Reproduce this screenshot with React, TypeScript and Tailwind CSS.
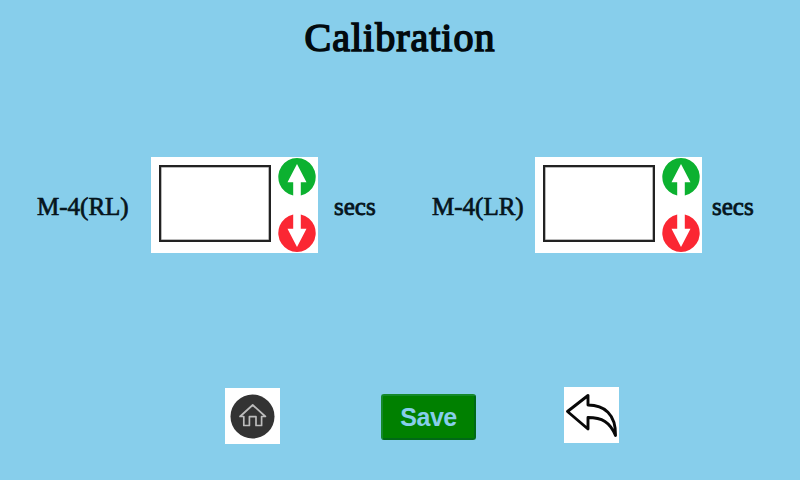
type SpinnerProps = { label: string; labelClass: string; unitClass: string };

const serif = "font-['Liberation_Serif','Times_New_Roman',serif]";

function UpArrow() {
  return (
    <svg className="block h-[40px] w-[38px]" viewBox="0 0 38 40" aria-hidden="true">
      <path d="M15.2 38.6A18.7 19 0 1 1 22.8 38.6V25.2H28.5L19 7L9.5 25.2H15.2Z" fill="#0cb130" />
    </svg>
  );
}

function DownArrow() {
  return (
    <svg className="block h-[40px] w-[38px]" viewBox="0 0 38 40" aria-hidden="true">
      <path d="M15.2 1.4A18.7 19 0 1 0 22.8 1.4V15.8H28.5L19 34L9.5 15.8H15.2Z" fill="#fb2733" />
    </svg>
  );
}

function Spinner({ label, labelClass, unitClass }: SpinnerProps) {
  return (
    <div className="flex items-start">
      <span className={`mt-[35px] whitespace-nowrap text-[25px] leading-[30px] text-[#06151d] [-webkit-text-stroke:0.7px_#06151d] ${labelClass} ${serif}`}>
        {label}
      </span>
      <div className="flex h-[96px] w-[167px] bg-white pl-[8px]">
        <button
          aria-label={label}
          className="mt-[8px] h-[77px] w-[112px] border-2 border-[#222] bg-white shadow-[inset_0_0_0_0.5px_#777]"
        />
        <div className="ml-[7px] flex flex-col justify-between">
          <button aria-label="Increase"><UpArrow /></button>
          <button aria-label="Decrease"><DownArrow /></button>
        </div>
      </div>
      <span className={`mt-[35px] text-[25px] leading-[30px] text-[#06151d] [-webkit-text-stroke:0.8px_#06151d] ${unitClass} ${serif}`}>
        secs
      </span>
    </div>
  );
}

export default function App() {
  return (
    <main className="flex h-[480px] w-[800px] flex-col overflow-hidden bg-[#87ceeb]">
      <h1 className={`h-[157px] pt-[15px] text-center text-[40px] leading-[46px] tracking-[1px] text-[#020a0e] [-webkit-text-stroke:1.6px_#020a0e] ${serif}`}>
        Calibration
      </h1>
      <section className="flex h-[230px] pl-[37px]">
        <Spinner label="M-4(RL)" labelClass="w-[114px]" unitClass="ml-[16px] w-[98px]" />
        <Spinner label="M-4(LR)" labelClass="w-[103px]" unitClass="ml-[10px]" />
      </section>
      <footer className="flex items-start pl-[225px]">
        <button aria-label="Home" className="mt-px h-[56px] w-[55px] bg-white">
          <svg className="block h-[56px] w-[55px]" viewBox="0 0 55 56" fill="none" aria-hidden="true">
            <circle cx="27.5" cy="28.5" r="22" fill="#333" />
            <path
              d="M15 28.5L27.7 17L40.4 28.5H36.6V37.5H31V28.7H24.4V37.5H18.8V28.5Z"
              stroke="#bcbcbc"
              strokeWidth="1.7"
              strokeLinejoin="round"
            />
          </svg>
        </button>
        <button className="ml-[101px] mt-[7px] h-[46px] w-[95px] rounded-[3px] border-2 border-t-[#15892a] border-l-[#15892a] border-r-[#006916] border-b-[#006916] bg-[#008000] font-['Liberation_Sans',Arial,sans-serif] text-[25px] leading-[41px] font-bold text-[#87ceeb]">
          <span className="block tracking-[-0.5px]">Save</span>
        </button>
        <button aria-label="Back" className="ml-[88px] h-[56px] w-[55px] bg-white">
          <svg className="block h-[56px] w-[55px]" viewBox="0 0 55 56" fill="none" aria-hidden="true">
            <path
              d="M3.5 24.5L24 8.5V18C40 18 52 27 51.5 48.5C46 35 38 30.5 24 30.5V42Z"
              stroke="#080808"
              strokeWidth="2.9"
              strokeLinejoin="round"
            />
          </svg>
        </button>
      </footer>
    </main>
  );
}
